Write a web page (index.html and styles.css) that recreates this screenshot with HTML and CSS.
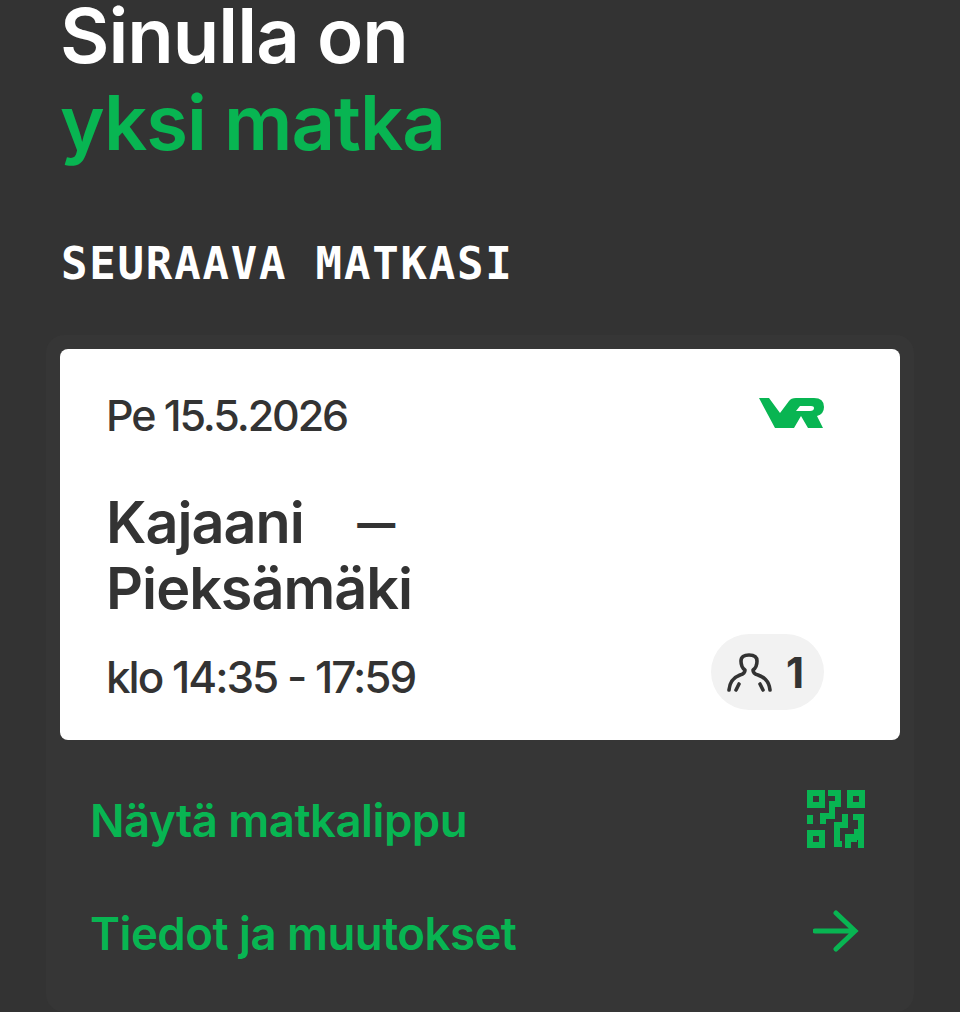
FILE: index.html
```html
<!DOCTYPE html>
<html lang="fi">
<head>
    <meta charset="UTF-8">
    <title>Matkat</title>
    <link rel="stylesheet" href="styles.css">
</head>
<body>
    <!-- Heading -->
    <h1 class="title">Sinulla on<span class="title-green">yksi matka</span></h1>
    <h2 class="section-label">SEURAAVA MATKASI</h2>

    <!-- Trip card -->
    <div class="trip">
        <div class="ticket">
            <div class="ticket-top">
                <div class="date">Pe 15.5.2026</div>
                <svg class="vr-logo" viewBox="0 0 65 30" width="65" height="30">
                    <path fill="#08b552" d="M0 0H10L21 15 30 3Q32 0 37 0H55Q65 0 65 9 65 16 58 18L64 30H49L42 18 35 30H16Z"/>
                    <path fill="#fff" d="M41 8 37 13H51Q55 13 55 10 55 8 52 8Z"/>
                </svg>
            </div>
            <div class="route">Kajaani <span class="dash">—</span><br>Pieksämäki</div>
            <div class="ticket-bottom">
                <div class="time">klo 14:35 - 17:59</div>
                <div class="passengers">
                    <svg viewBox="0 0 45 39" width="45" height="39" fill="none" stroke="#333" stroke-width="3.6" stroke-linecap="round" stroke-linejoin="round">
                        <path d="M2 37C3 27 8 24 13 22 17 21 18 19 18 17 15 15 14 11 14 8 14 4 17 2 22 2S30 4 30 8C30 11 29 15 26 17 26 19 27 21 31 22 36 24 42 27 43 37"/>
                        <path d="M12 31 9 37M33 31 36 37"/>
                    </svg>
                    <span class="count">1</span>
                </div>
            </div>
        </div>
        <div class="trip-link">
            <span>Näytä matkalippu</span>
            <svg class="qr" viewBox="0 0 58 58" width="58" height="58" fill="none" stroke="#08b552" stroke-width="6">
                <rect x="3" y="3" width="12" height="12"/>
                <rect x="43" y="3" width="12" height="12"/>
                <rect x="3" y="43" width="12" height="12"/>
                <path d="M21 3H31V14H25V26H16V34M3 25V34M46 27H54V42H47M38 24V35H30V54H35M41 58V47H54V58M47 47V52"/>
            </svg>
        </div>
        <div class="trip-link">
            <span>Tiedot ja muutokset</span>
            <svg class="arrow" viewBox="0 0 46 42" width="46" height="42" fill="none" stroke="#08b552" stroke-width="5" stroke-linecap="round">
                <path d="M2 21H41M23 3 42 21 23 39"/>
            </svg>
        </div>
    </div>
</body>
</html>
```

FILE: styles.css
```css
body {
    margin: 0;
    height: 1012px;
    overflow: hidden;
    background-color: #333333;
    font-family: 'Inter', sans-serif;
    color: #333333;
    padding: 0 46px;
    box-sizing: border-box;
}

/* Heading */
.title {
    margin: 0 0 0 14px;
    font-size: 76px;
    line-height: 70px;
    font-weight: 600;
    letter-spacing: -1px;
    color: #ffffff;
}

.title-green {
    display: block;
    margin-top: 17px;
    color: #08b552;
}

.section-label {
    margin: 84px 0 48px 15px;
    font-family: 'DejaVu Sans Mono', monospace;
    font-size: 44px;
    line-height: 46px;
    font-weight: 700;
    letter-spacing: 1.8px;
    color: #ffffff;
}

/* Trip card */
.trip {
    background-color: #363636;
    border-radius: 18px;
    padding: 14px 14px 0;
    height: 677px;
    box-sizing: border-box;
}

.ticket {
    background-color: #ffffff;
    border-radius: 8px;
    height: 391px;
    padding: 40px 76px 30px 46px;
    box-sizing: border-box;
}

.ticket-top,
.ticket-bottom {
    display: flex;
    justify-content: space-between;
    align-items: center;
}

.date,
.time {
    font-size: 44px;
    line-height: 52px;
    font-weight: 500;
    letter-spacing: -2px;
}

.date {
    font-size: 43px;
    letter-spacing: -2.1px;
}

.vr-logo {
    margin-top: -4px;
}

.route {
    margin-top: 48px;
    font-size: 57.5px;
    line-height: 66px;
    font-weight: 600;
    letter-spacing: -1px;
}

.dash {
    margin-left: 40px;
    font-size: 38px;
    line-height: 0;
    font-weight: 800;
    position: relative;
    top: -6px;
}

.ticket-bottom {
    margin-top: 13px;
}

.time {
    padding-top: 10px;
}

.passengers {
    display: flex;
    align-items: center;
    gap: 14px;
    width: 113px;
    height: 76px;
    padding-left: 16px;
    box-sizing: border-box;
    border-radius: 38px;
    background-color: #f2f2f2;
}

.count {
    font-size: 42px;
    font-weight: 700;
}

.trip-link {
    display: flex;
    justify-content: space-between;
    align-items: center;
    height: 113px;
    padding: 0 35px 0 30px;
    font-size: 45.5px;
    font-weight: 600;
    letter-spacing: -0.5px;
    color: #08b552;
    position: relative;
    top: 24px;
}

.qr {
    margin-bottom: 4px;
}

.arrow {
    margin-right: 6px;
    margin-bottom: 6px;
}
```
